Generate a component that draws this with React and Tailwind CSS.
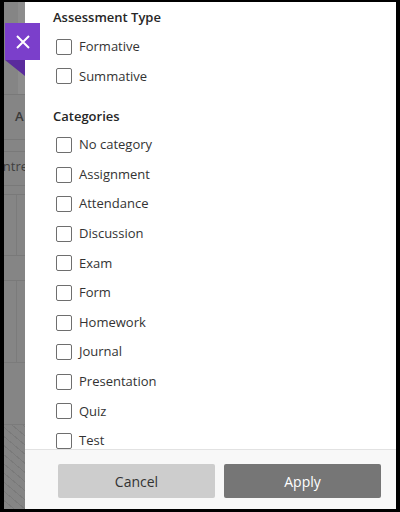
import React from "react";

const assessmentTypes = ["Formative", "Summative"];

const categories = [
  "No category",
  "Assignment",
  "Attendance",
  "Discussion",
  "Exam",
  "Form",
  "Homework",
  "Journal",
  "Presentation",
  "Quiz",
  "Test",
];

const CheckRow = ({ label }) => (
  <label className="flex h-[29.6px] items-center pl-[31px]">
    <span className="mr-[7px] h-[16px] w-[16px] shrink-0 rounded-[2px] border-[1.5px] border-[#6e6e6e] bg-white" />
    <span className="text-[13px] text-[#333333]">{label}</span>
  </label>
);

// grey strip of the page that is showing behind the panel
const BackdropStrip = () => (
  <div className="flex w-[21px] shrink-0 flex-col overflow-hidden bg-[#858585]">
    <div className="flex h-[92px] shrink-0">
      <div className="w-[14px]" />
      <div className="flex-1 bg-[#8d8d8d]" />
    </div>
    <div className="h-[45px] shrink-0 border-t border-[#797979] pl-[11px] pt-[12px] text-[13px] font-semibold text-[#3a3a3a]">
      A
    </div>
    <div className="h-[12px] shrink-0 border-t border-[#797979]" />
    <div className="flex h-[34px] shrink-0 justify-end overflow-hidden border-t border-[#797979] pt-[5px] text-[13px] text-[#3f3f3f] whitespace-nowrap">
      <span className="-mr-[3px]">entre</span>
    </div>
    <div className="h-[9px] shrink-0 border-t border-[#797979]" />
    <div className="flex h-[61px] shrink-0 border-t border-[#797979]">
      <div className="w-[13px] border-r border-[#7b7b7b]" />
    </div>
    <div className="h-[25px] shrink-0 border-t border-[#797979]" />
    <div className="flex h-[82px] shrink-0 border-t border-[#797979]">
      <div className="w-[13px] border-r border-[#7b7b7b]" />
    </div>
    <div className="h-[62px] shrink-0 border-t border-[#7b7b7b]" />
    <div className="flex-1 border-t border-[#7b7b7b] bg-[repeating-linear-gradient(40deg,#858585_0px,#858585_6px,#7a7a7a_6px,#7a7a7a_7px)]" />
  </div>
);

const App = () => {
  return (
    <div
      className="relative flex h-[512px] w-[400px] bg-black pb-[3px] pl-[4px] pr-[4px] pt-[2px]"
      style={{ fontFamily: '"Open Sans", "Noto Sans", sans-serif' }}
    >
      <BackdropStrip />

      {/* filter panel */}
      <div className="flex min-w-0 flex-1 flex-col bg-white">
        <div className="flex-1 overflow-hidden pt-[5px]">
          <h3 className="h-[20px] pl-[28px] text-[13px] font-semibold leading-[20px] text-[#262626]">
            Assessment Type
          </h3>
          <div className="mt-[5px]">
            {assessmentTypes.map((t) => (
              <CheckRow key={t} label={t} />
            ))}
          </div>

          <h3 className="mt-[15px] h-[20px] pl-[28px] text-[13px] font-semibold leading-[20px] text-[#262626]">
            Categories
          </h3>
          <div className="mt-[4px]">
            {categories.map((c) => (
              <CheckRow key={c} label={c} />
            ))}
          </div>
        </div>

        <div className="flex h-[60px] shrink-0 gap-[9px] border-t border-[#e2e2e2] bg-[#f8f8f8] pb-[11px] pl-[33px] pr-[15px] pt-[14px]">
          <button className="h-[34px] w-[157px] rounded-[2px] bg-[#cdcdcd] text-[14px] text-[#333333]">
            Cancel
          </button>
          <button className="h-[34px] w-[157px] rounded-[2px] bg-[#767676] text-[14px] text-white">
            Apply
          </button>
        </div>
      </div>

      {/* close tab */}
      <div className="absolute left-[5px] top-[23px]">
        <button className="flex h-[37px] w-[35px] items-center justify-center bg-[#7b3fcb]">
          <svg width="14" height="14" viewBox="0 0 14 14" fill="none">
            <path d="M1 1L13 13M13 1L1 13" stroke="white" strokeWidth="2" />
          </svg>
        </button>
        <svg width="20" height="16" viewBox="0 0 20 16" className="block">
          <path d="M0 0H20V16Z" fill="#5a2b9c" />
        </svg>
      </div>
    </div>
  );
};

export default App;
